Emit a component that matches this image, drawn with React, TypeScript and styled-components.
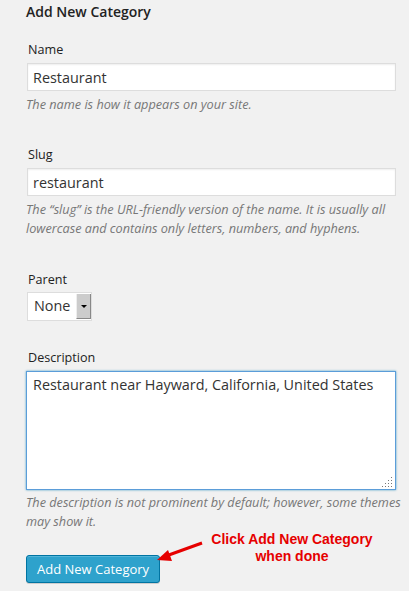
import React from "react";
import styled, { createGlobalStyle } from "styled-components";

const GlobalStyle = createGlobalStyle`
  html, body {
    margin: 0;
    padding: 0;
    background: #f1f1f1;
  }
  body {
    font-family: "Open Sans", "Liberation Sans", sans-serif;
    color: #444;
  }
`;

const Page = styled.div`
  width: 409px;
  height: 591px;
  padding: 2px 0 0 26px;
  box-sizing: border-box;
  overflow: hidden;
`;

const Heading = styled.h3`
  margin: 0;
  font-size: 14px;
  font-weight: 600;
  line-height: 20px;
  color: #222;
`;

const Field = styled.div<{ $top: number }>`
  margin-top: ${(p) => p.$top}px;
  width: 381px;
`;

const Label = styled.label`
  display: block;
  font-size: 12.6px;
  line-height: 18px;
  color: #222;
  padding-left: 2px;
`;

const TextInput = styled.input`
  display: block;
  box-sizing: border-box;
  width: 369px;
  height: 28px;
  margin: 4px 0 0 1px;
  padding: 0 5px;
  border: 1px solid #ddd;
  box-shadow: inset 0 1px 2px rgba(0, 0, 0, 0.07);
  background: #fff;
  font-family: "Open Sans", sans-serif;
  font-size: 14.4px;
  color: #333;
  outline: none;
`;

const Help = styled.p<{ $top?: number }>`
  margin: ${(p) => p.$top ?? 4}px 0 0;
  font-size: 12.7px;
  font-style: italic;
  line-height: 19px;
  color: #777;
`;

const Select = styled.div`
  display: flex;
  width: 65px;
  height: 29px;
  margin: 3px 0 0 1px;
  box-sizing: border-box;
  border: 1px solid #ddd;
  background: #fff;
`;

const SelectValue = styled.span`
  flex: 1;
  padding-left: 6px;
  font-size: 14.4px;
  line-height: 26px;
  color: #333;
`;

const SelectButton = styled.span`
  width: 13px;
  margin: 1px 0;
  background: #ccc;
  border-left: 1px solid #eee;
  border-right: 1px solid #888;
  border-bottom: 1px solid #888;
  display: flex;
  align-items: center;
  justify-content: center;
  &::after {
    content: "";
    border-left: 3px solid transparent;
    border-right: 3px solid transparent;
    border-top: 3px solid #000;
  }
`;

const AreaWrap = styled.div`
  position: relative;
  width: 370px;
  margin-top: 4px;
`;

const TextArea = styled.textarea`
  display: block;
  box-sizing: border-box;
  width: 370px;
  height: 119px;
  margin: 0;
  padding: 3px 6px;
  border: 1px solid #5b9dd9;
  box-shadow: 0 0 2px rgba(30, 140, 190, 0.8);
  background: #fff;
  resize: none;
  outline: none;
  font-family: "Open Sans", sans-serif;
  font-size: 14.4px;
  line-height: 20px;
  color: #333;
`;

const Grip = styled.svg`
  position: absolute;
  right: 3px;
  bottom: 3px;
`;

const ButtonRow = styled.div`
  position: relative;
  margin-top: 24px;
`;

const PrimaryButton = styled.button`
  height: 28px;
  padding: 0 10px;
  border: 1px solid #0074a2;
  border-radius: 3px;
  background: #2ea2cc;
  box-shadow: inset 0 1px 0 rgba(120, 200, 230, 0.5), 0 1px 0 rgba(0, 0, 0, 0.15);
  color: #fff;
  font-family: "Open Sans", sans-serif;
  font-size: 13px;
  line-height: 26px;
`;

const Note = styled.div`
  position: absolute;
  left: 180px;
  top: -24px;
  width: 172px;
  text-align: center;
  font-family: "Liberation Sans", Arial, sans-serif;
  font-weight: bold;
  font-size: 14px;
  line-height: 17px;
  color: #e60000;
`;

const Arrow = styled.svg`
  position: absolute;
  left: 128px;
  top: -16px;
`;

export default function App() {
  return (
    <>
      <GlobalStyle />
      <Page>
        <Heading>Add New Category</Heading>

        <Field $top={19}>
          <Label>Name</Label>
          <TextInput defaultValue="Restaurant" />
          <Help>The name is how it appears on your site.</Help>
        </Field>

        <Field $top={32}>
          <Label>Slug</Label>
          <TextInput defaultValue="restaurant" />
          <Help>
            The “slug” is the URL-friendly version of the name. It is usually all lowercase and
            contains only letters, numbers, and hyphens.
          </Help>
        </Field>

        <Field $top={33}>
          <Label>Parent</Label>
          <Select>
            <SelectValue>None</SelectValue>
            <SelectButton />
          </Select>
        </Field>

        <Field $top={28}>
          <Label>Description</Label>
          <AreaWrap>
            <TextArea defaultValue="Restaurant near Hayward, California, United States" />
            <Grip width="11" height="11" viewBox="0 0 11 11">
              {[
                [9, 1], [9, 4], [6, 4], [9, 7], [6, 7], [3, 7], [9, 10], [6, 10], [3, 10], [0, 10],
              ].map(([x, y], i) => (
                <rect key={i} x={x} y={y} width="1" height="1" fill="#777" />
              ))}
            </Grip>
          </AreaWrap>
          <Help $top={3}>
            The description is not prominent by default; however, some themes may show it.
          </Help>
        </Field>

        <ButtonRow>
          <PrimaryButton>Add New Category</PrimaryButton>
          <Note>
            Click Add New Category
            <br />
            when done
          </Note>
          <Arrow width="50" height="24" viewBox="0 0 50 24">
            <line x1="48" y1="4" x2="12" y2="17" stroke="#e60000" strokeWidth="3" />
            <polygon points="3,21 14,11 18,22" fill="#e60000" />
          </Arrow>
        </ButtonRow>
      </Page>
    </>
  );
}
